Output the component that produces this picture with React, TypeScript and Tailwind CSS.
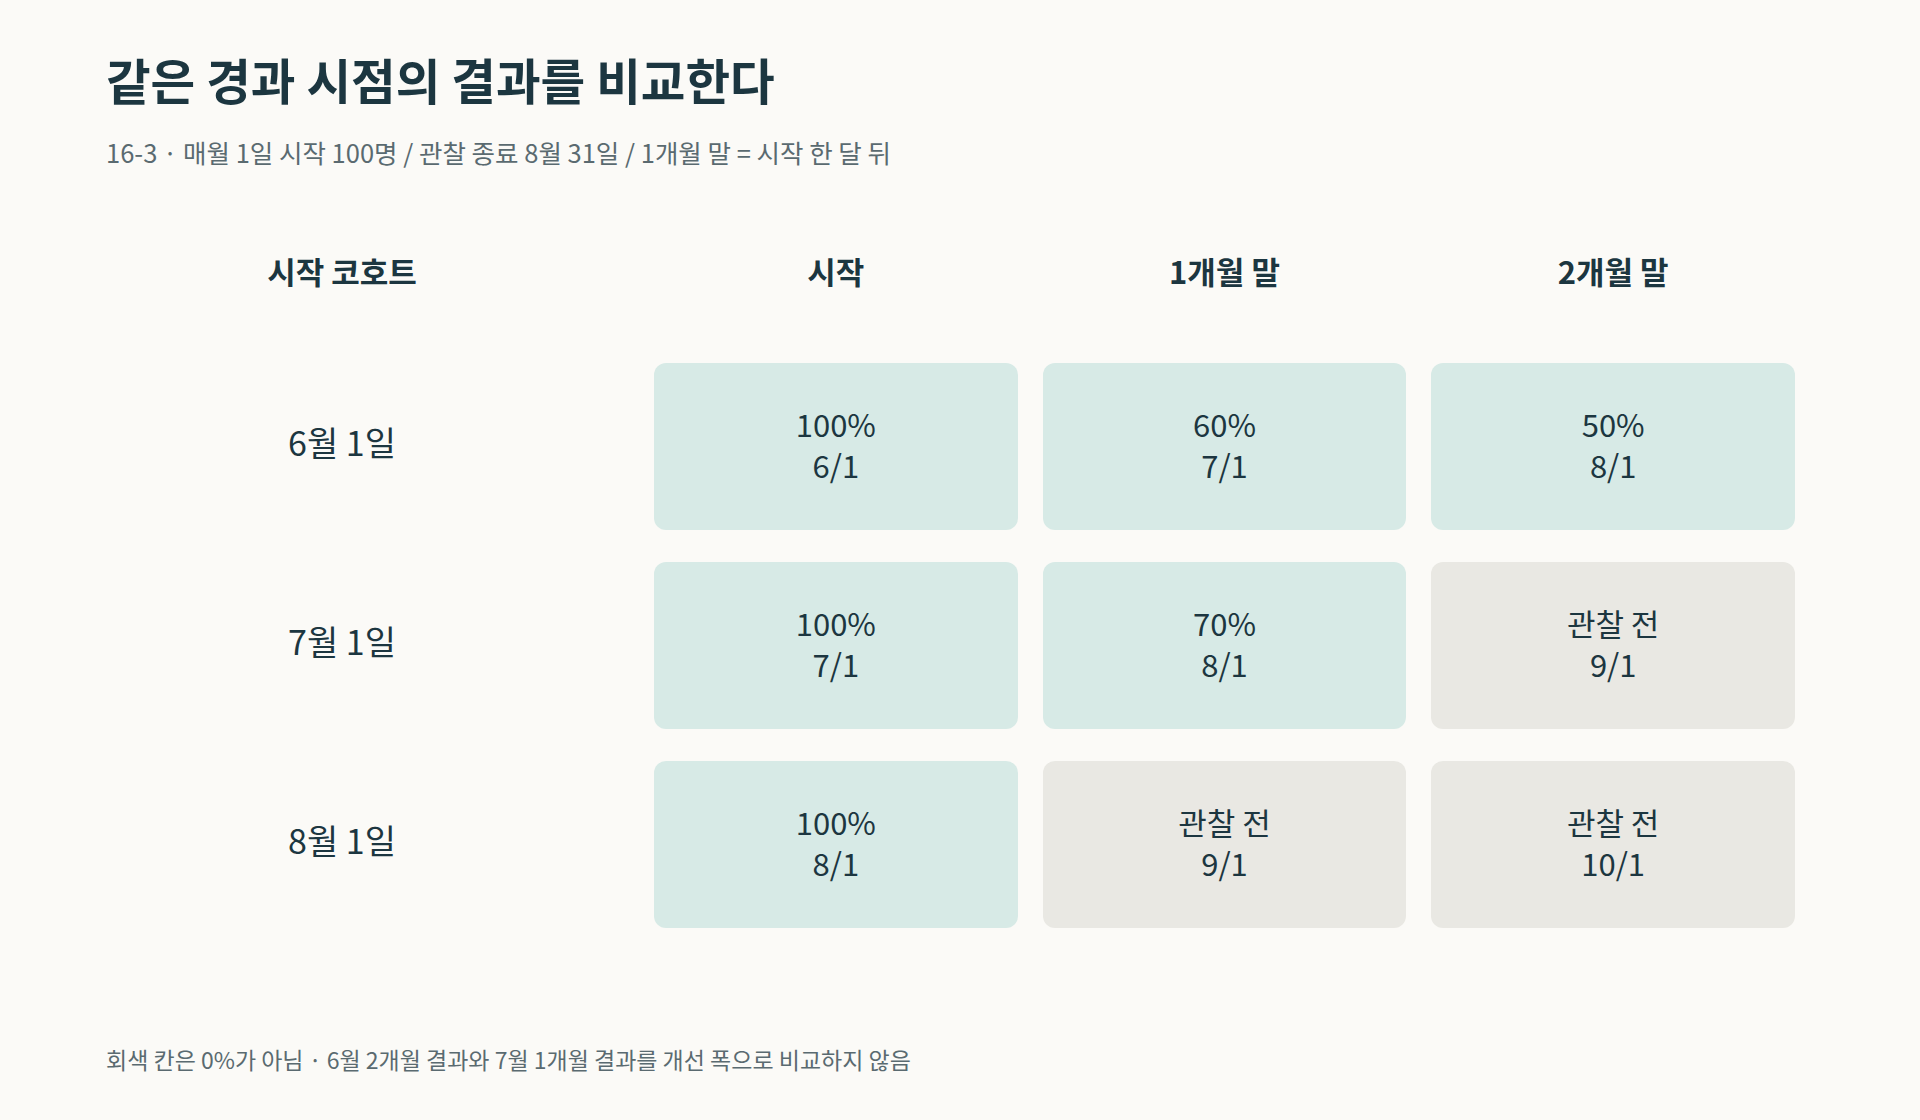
const FONT = '"Noto Sans CJK KR", "Noto Sans", sans-serif';

type Cell = { value: string; date: string; observed: boolean };

const rows: { label: string; cells: Cell[] }[] = [
  {
    label: "6월 1일",
    cells: [
      { value: "100%", date: "6/1", observed: true },
      { value: "60%", date: "7/1", observed: true },
      { value: "50%", date: "8/1", observed: true },
    ],
  },
  {
    label: "7월 1일",
    cells: [
      { value: "100%", date: "7/1", observed: true },
      { value: "70%", date: "8/1", observed: true },
      { value: "관찰 전", date: "9/1", observed: false },
    ],
  },
  {
    label: "8월 1일",
    cells: [
      { value: "100%", date: "8/1", observed: true },
      { value: "관찰 전", date: "9/1", observed: false },
      { value: "관찰 전", date: "10/1", observed: false },
    ],
  },
];

const columns = ["시작", "1개월 말", "2개월 말"];

function CohortCell({ cell }: { cell: Cell }) {
  return (
    <div
      className={`flex h-[167px] flex-col items-center justify-center rounded-[12px] pb-[6px] text-[31px] leading-[41px] text-[#1c3640] ${
        cell.observed ? "bg-[#d7eae6]" : "bg-[#e9e8e3]"
      }`}
    >
      <span>{cell.value}</span>
      <span>{cell.date}</span>
    </div>
  );
}

export default function App() {
  return (
    <div
      className="min-h-screen bg-[#fbfaf7] px-[106px] pt-[50px] text-[#1c3640]"
      style={{ fontFamily: FONT }}
    >
      <h1 className="text-[48.5px] font-bold leading-[59px]">
        같은 경과 시점의 결과를 비교한다
      </h1>
      <p className="mt-[25px] text-[25.5px] leading-[35px] text-[#5a6a70]">
        16-3 · 매월 1일 시작 100명 / 관찰 종료 8월 31일 / 1개월 말 = 시작 한 달 뒤
      </p>

      <div className="mt-[83px] flex items-center">
        <div className="w-[472px] text-center text-[31px] font-bold leading-[37px]">시작 코호트</div>
        <div className="ml-[76px] grid w-[1141px] grid-cols-3 gap-x-[25px]">
          {columns.map((c) => (
            <div key={c} className="text-center text-[31px] font-bold leading-[37px]">
              {c}
            </div>
          ))}
        </div>
      </div>

      <div className="mt-[74px] flex flex-col gap-[32px]">
        {rows.map((r) => (
          <div key={r.label} className="flex items-center">
            <div className="w-[472px] pb-[10px] text-center text-[34px] leading-[42px]">{r.label}</div>
            <div className="ml-[76px] grid w-[1141px] grid-cols-3 gap-x-[25px]">
              {r.cells.map((cell, i) => (
                <CohortCell key={i} cell={cell} />
              ))}
            </div>
          </div>
        ))}
      </div>

      <p className="mt-[115px] text-[23px] leading-[32px] text-[#5a6a70]">
        회색 칸은 0%가 아님 · 6월 2개월 결과와 7월 1개월 결과를 개선 폭으로 비교하지 않음
      </p>
    </div>
  );
}
